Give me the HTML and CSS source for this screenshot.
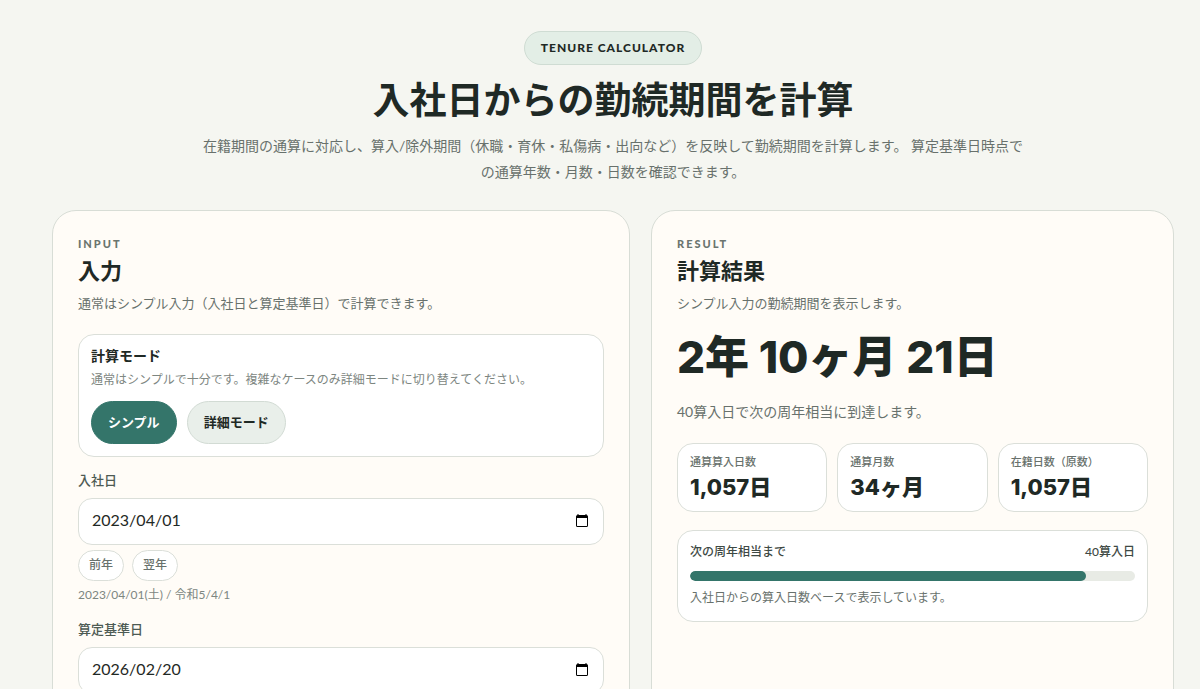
FILE: index.html
```html
<!DOCTYPE html>
<html lang="ja">
<head>
<meta charset="utf-8">
<meta name="viewport" content="width=device-width, initial-scale=1">
<title>入社日からの勤続期間を計算</title>
<link rel="stylesheet" href="styles.css">
</head>
<body>
<main class="page">
  <header class="hero">
    <span class="badge">TENURE CALCULATOR</span>
    <h1>入社日からの勤続期間を計算</h1>
    <p>在籍期間の通算に対応し、算入/除外期間（休職・育休・私傷病・出向など）を反映して勤続期間を計算します。 算定基準日時点での通算年数・月数・日数を確認できます。</p>
  </header>
  <div class="columns">
    <section class="card">
      <div class="eyebrow">INPUT</div>
      <h2>入力</h2>
      <p class="lead">通常はシンプル入力（入社日と算定基準日）で計算できます。</p>
      <div class="panel mode">
        <h3>計算モード</h3>
        <p>通常はシンプルで十分です。複雑なケースのみ詳細モードに切り替えてください。</p>
        <div class="modes">
          <button type="button" class="pill active" aria-pressed="true">シンプル</button>
          <button type="button" class="pill" aria-pressed="false">詳細モード</button>
        </div>
      </div>
      <div class="field">
        <label for="joined">入社日</label>
        <div class="control">
          <input id="joined" type="text" value="2023/04/01">
          <button type="button" class="picker" aria-label="入社日を選択"><svg viewBox="0 0 12 13"><path fill-rule="evenodd" d="M1.500 0h1v1h7V0h1v1A1.500 1.500 0 0 1 12 2.500v9A1.500 1.500 0 0 1 10.500 13h-9A1.500 1.500 0 0 1 0 11.500v-9A1.500 1.500 0 0 1 1.500 1zM1 4v7.500a.5.5 0 0 0 .5.5h9a.5.5 0 0 0 .5-.5V4z"/></svg></button>
        </div>
        <div class="years">
          <button type="button">前年</button>
          <button type="button">翌年</button>
        </div>
        <p class="hint">2023/04/01(土) / 令和5/4/1</p>
      </div>
      <div class="field">
        <label for="base">算定基準日</label>
        <div class="control">
          <input id="base" type="text" value="2026/02/20">
          <button type="button" class="picker" aria-label="算定基準日を選択"><svg viewBox="0 0 12 13"><path fill-rule="evenodd" d="M1.500 0h1v1h7V0h1v1A1.500 1.500 0 0 1 12 2.500v9A1.500 1.500 0 0 1 10.500 13h-9A1.500 1.500 0 0 1 0 11.500v-9A1.500 1.500 0 0 1 1.500 1zM1 4v7.500a.5.5 0 0 0 .5.5h9a.5.5 0 0 0 .5-.5V4z"/></svg></button>
        </div>
      </div>
    </section>
    <section class="card">
      <div class="eyebrow">RESULT</div>
      <h2>計算結果</h2>
      <p class="lead">シンプル入力の勤続期間を表示します。</p>
      <div class="total">2年 10ヶ月 21日</div>
      <p class="next">40算入日で次の周年相当に到達します。</p>
      <dl class="stats">
        <div class="panel"><dt>通算算入日数</dt><dd>1,057日</dd></div>
        <div class="panel"><dt>通算月数</dt><dd>34ヶ月</dd></div>
        <div class="panel"><dt>在籍日数（原数）</dt><dd>1,057日</dd></div>
      </dl>
      <div class="panel progress">
        <div class="progress-head"><span>次の周年相当まで</span><span>40算入日</span></div>
        <div class="track" role="progressbar" aria-label="次の周年相当まで" aria-valuenow="89" aria-valuemin="0" aria-valuemax="100"><div class="bar" style="width: 89%"></div></div>
        <p>入社日からの算入日数ベースで表示しています。</p>
      </div>
    </section>
  </div>
</main>
</body>
</html>
```
FILE: styles.css
```css
* { box-sizing: border-box; }
body {
  margin: 0;
  background: #f5f6f1;
  color: #1f2925;
  font-family: Lato, "Noto Sans CJK JP", sans-serif;
  font-size: 14px;
  line-height: 24px;
}
h1, h2, h3, p, dl, dd { margin: 0; }
button, input { font: inherit; color: inherit; }
button { cursor: pointer; }
.page { padding: 31px 26px 0 52px; }
.hero { display: flex; flex-direction: column; align-items: center; text-align: center; }
.badge {
  padding: 4px 16px;
  border: 1px solid #cfdcd3;
  border-radius: 999px;
  background: #e3eee6;
  font-size: 12px;
  font-weight: 900;
  letter-spacing: 1px;
}
.hero h1 { margin-top: 8px; font-size: 37px; line-height: 54px; font-weight: 700; }
.hero p { max-width: 830px; margin-top: 6px; line-height: 26px; color: #68716c; }
.columns { display: grid; grid-template-columns: 578fr 523fr; gap: 21px; margin-top: 25px; }
.card {
  min-width: 0;
  padding: 24px 25px;
  border: 1px solid #d8ddd6;
  border-radius: 24px;
  background: #fffcf7;
}
.eyebrow { font-size: 11px; line-height: 18px; font-weight: 900; letter-spacing: 2px; color: #6b756f; }
.card h2 { font-size: 22px; line-height: 36px; }
.lead { margin-top: 2px; font-size: 13px; line-height: 24px; color: #68716c; }
.panel { border: 1px solid #dbdfd9; border-radius: 16px; background: #fff; }
.mode { margin-top: 19px; padding: 10px 12px 12px; }
.mode h3 { font-size: 14px; line-height: 22px; }
.mode p { margin-top: 1px; font-size: 12px; line-height: 24px; color: #7d8681; }
.modes { display: flex; gap: 10px; margin-top: 9px; }
.pill {
  height: 43px;
  padding: 0 16px 2px;
  border: 1px solid #d2dbd4;
  border-radius: 999px;
  background: #e9efea;
  font-size: 13px;
  font-weight: 700;
}
.pill.active { border-color: #34756a; background: #34756a; color: #fff; }
.field { margin-top: 11px; }
.field label { display: block; font-size: 13px; font-weight: 500; color: #4d5a53; }
.control {
  display: flex;
  align-items: center;
  height: 47px;
  margin-top: 6px;
  padding: 0 15px 0 13px;
  border: 1px solid #dbdfd9;
  border-radius: 14px;
  background: #fff;
}
.control input { flex: 1; min-width: 0; padding: 0 0 3px; border: 0; background: none; font-family: Lato, sans-serif; font-size: 16px; }
.picker { display: flex; padding: 0 0 2px; border: 0; background: none; }
.picker svg { width: 12px; height: 13px; fill: #000; }
.years { display: flex; gap: 8px; margin-top: 5px; }
.years button { height: 31px; padding: 0 10px 1px; border: 1px solid #dbdfd9; border-radius: 999px; background: #fff; font-size: 12px; font-weight: 500; color: #68716c; }
.hint { margin-top: 2px; font-size: 12px; color: #7d8681; }
.field + .field { margin-top: 10px; }
.total { margin-top: 12px; font-family: Inter, "Noto Sans CJK JP", sans-serif; font-size: 44px; line-height: 60px; font-weight: 800; }
.next { margin-top: 13px; color: #68716c; }
.stats { display: grid; grid-template-columns: repeat(3, 1fr); gap: 10px; margin-top: 19px; }
.stats .panel { padding: 8px 12px; }
.stats dt { font-size: 11px; line-height: 20px; font-weight: 500; color: #68716c; }
.stats dd { font-family: Inter, "Noto Sans CJK JP", sans-serif; font-size: 22px; line-height: 31px; font-weight: 800; }
.progress { margin-top: 18px; padding: 11px 12px; }
.progress-head { display: flex; justify-content: space-between; font-size: 12px; line-height: 20px; font-weight: 500; color: #3e4944; }
.track { height: 10px; margin-top: 9px; border-radius: 999px; background: #e8ebe5; overflow: hidden; }
.bar { height: 100%; border-radius: 999px; background: #34756a; }
.progress p { margin-top: 5px; font-size: 12px; color: #68716c; }
```
